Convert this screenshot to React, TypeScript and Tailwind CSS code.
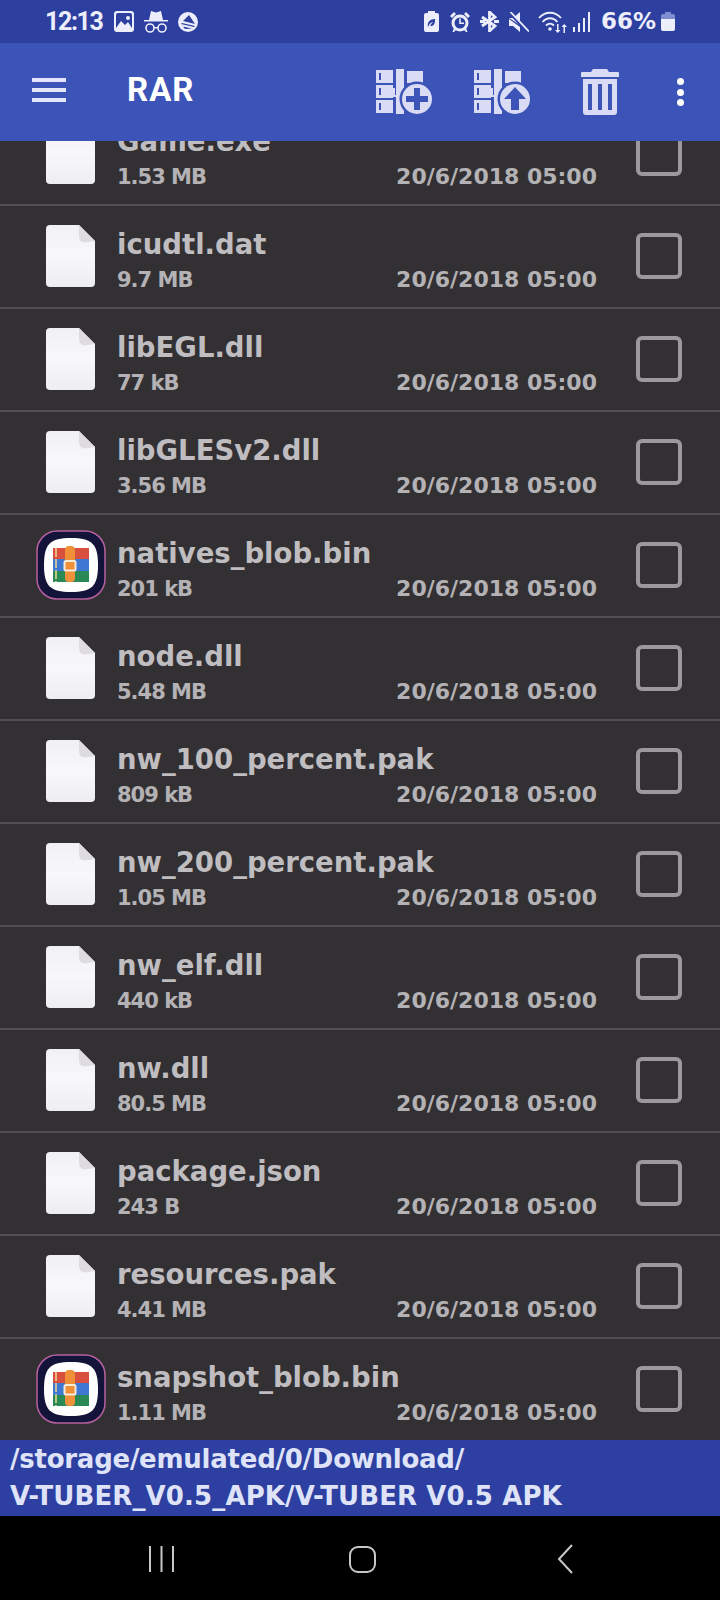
import type { ReactNode } from "react";

type FileEntry = { name: string; size: string; archive?: boolean };

const FILES: FileEntry[] = [
  { name: "Game.exe", size: "1.53 MB" },
  { name: "icudtl.dat", size: "9.7 MB" },
  { name: "libEGL.dll", size: "77 kB" },
  { name: "libGLESv2.dll", size: "3.56 MB" },
  { name: "natives_blob.bin", size: "201 kB", archive: true },
  { name: "node.dll", size: "5.48 MB" },
  { name: "nw_100_percent.pak", size: "809 kB" },
  { name: "nw_200_percent.pak", size: "1.05 MB" },
  { name: "nw_elf.dll", size: "440 kB" },
  { name: "nw.dll", size: "80.5 MB" },
  { name: "package.json", size: "243 B" },
  { name: "resources.pak", size: "4.41 MB" },
  { name: "snapshot_blob.bin", size: "1.11 MB", archive: true },
];

function DocIcon() {
  return (
    <svg width="49" height="62" viewBox="0 0 49 62" className="block">
      <defs>
        <linearGradient id="sheet" x1="0" y1="0" x2="0" y2="1">
          <stop offset="0" stopColor="#f1f0f3" />
          <stop offset="0.5" stopColor="#f8f7fa" />
          <stop offset="1" stopColor="#eeedf0" />
        </linearGradient>
      </defs>
      <path d="M4 0H33L49 16V58a4 4 0 0 1-4 4H4a4 4 0 0 1-4-4V4a4 4 0 0 1 4-4Z" fill="url(#sheet)" />
      <path d="M33 0L49 16L39 17.5Q33 17 33 11Z" fill="#dedce0" />
    </svg>
  );
}

function RarAppIcon() {
  return (
    <svg width="70" height="70" viewBox="0 0 70 70" className="block">
      <rect x="1" y="1" width="68" height="68" rx="20" fill="#14143a" stroke="#b8609f" strokeWidth="1.5" />
      <path d="M35 8C56 8 62 14 62 35S56 62 35 62S8 56 8 35S14 8 35 8Z" fill="#ffffff" />
      <rect x="17" y="18" width="36" height="11" fill="#d9503f" />
      <rect x="17" y="29" width="36" height="12" fill="#3f78d2" />
      <rect x="17" y="41" width="36" height="11" fill="#2a8a55" />
      <path d="M20 18V52" stroke="#f0d890" strokeWidth="1.5" strokeDasharray="9 2" />
      <rect x="29" y="16" width="10" height="36" rx="4" fill="#f0913a" />
      <rect x="28.5" y="31" width="11" height="9.5" rx="1.5" fill="none" stroke="#f6ecdc" strokeWidth="2" />
    </svg>
  );
}

// Stacked books shared by the two archive actions in the toolbar
function ArchiveBooks() {
  return (
    <>
      <path
        fillRule="evenodd"
        d="M0 1H17V14H0ZM3 4V11H5V4ZM0 16H17V29H0ZM3 19V26H5V19ZM0 31H17V44H0ZM3 34V41H5V34Z"
      />
      <path d="M20 0H28V45H20Z" />
      <path d="M31 2H47V14H31Z" />
      <path d="M17 19H19V26H23V28H17Z" />
    </>
  );
}

function AddArchiveIcon() {
  return (
    <svg width="57" height="46" viewBox="0 0 57 46" fill="#dadcf5" className="block">
      <ArchiveBooks />
      <circle cx="41" cy="30" r="17.5" fill="#3c54b7" />
      <circle cx="41" cy="30" r="15" />
      <path d="M38 19H44V27H52V33H44V41H38V33H30V27H38Z" fill="#3c54b7" />
    </svg>
  );
}

function ExtractArchiveIcon() {
  return (
    <svg width="57" height="46" viewBox="0 0 57 46" fill="#dadcf5" className="block">
      <ArchiveBooks />
      <circle cx="41" cy="30" r="17.5" fill="#3c54b7" />
      <circle cx="41" cy="30" r="15" />
      <path d="M41 18L52 30H45V41H37V30H30Z" fill="#3c54b7" />
    </svg>
  );
}

function TrashIcon() {
  return (
    <svg width="38" height="46" viewBox="0 0 38 46" fill="#dadcf5" className="block">
      <path d="M12 0H26L28 3H37a1 1 0 0 1 1 1V8H0V4a1 1 0 0 1 1-1H10Z" />
      <path
        fillRule="evenodd"
        d="M2 10H36V43a3 3 0 0 1-3 3H5a3 3 0 0 1-3-3ZM7 15V41H11V15ZM17 15V41H21V15ZM27 15V41H31V15Z"
      />
    </svg>
  );
}

function StatusSvg({ w, h, children }: { w: number; h: number; children: ReactNode }) {
  return (
    <svg width={w} height={h} viewBox={`0 0 ${w} ${h}`} fill="#eceefb" className="block">
      {children}
    </svg>
  );
}

function StatusBar() {
  return (
    <div className="flex h-[43px] items-center bg-[#2d3f9f] pl-[45px] text-[#eceefb]">
      <span className="w-[69px] font-[Roboto,sans-serif] text-[25px] font-bold leading-none tracking-[-1.4px]">
        12:13
      </span>
      <StatusSvg w={20} h={21}>
        <path
          fillRule="evenodd"
          d="M3 0H17a3 3 0 0 1 3 3V18a3 3 0 0 1-3 3H3a3 3 0 0 1-3-3V3a3 3 0 0 1 3-3ZM2 17L7 10L11 14L14 11L18 17V4a2 2 0 0 0-2-2H4a2 2 0 0 0-2 2ZM14 5a2 2 0 1 1 0 4a2 2 0 0 1 0-4Z"
        />
      </StatusSvg>
      <div className="ml-[10px]">
        <StatusSvg w={24} h={22}>
          <path d="M7 0L12 1.5L17 0L19 9H24V10.5H0V9H5Z" />
          <circle cx="6" cy="17" r="4" fill="none" stroke="#eceefb" strokeWidth="1.6" />
          <circle cx="18" cy="17" r="4" fill="none" stroke="#eceefb" strokeWidth="1.6" />
          <path d="M10 16H14V17.5H10Z" />
        </StatusSvg>
      </div>
      <div className="ml-[10px]">
        <StatusSvg w={20} h={20}>
          <path
            fillRule="evenodd"
            d="M10 0a10 10 0 1 1 0 20a10 10 0 0 1 0-20ZM11 3L5 9L17 12ZM4 11L3 12L16 15L17 14ZM5 14.5L7 17L14 16.5Z"
          />
        </StatusSvg>
      </div>

      <div className="ml-auto mr-[45px] flex items-center">
        <StatusSvg w={15} h={21}>
          <path
            fillRule="evenodd"
            d="M4 0H11V2H13a2 2 0 0 1 2 2V19a2 2 0 0 1-2 2H2a2 2 0 0 1-2-2V4a2 2 0 0 1 2-2H4ZM11 8C6 8 3 11 4 16L5 14C6 12 8 11 9 11L6 14.5C9 16 11.5 13 11 8Z"
          />
        </StatusSvg>
        <div className="ml-[11px]">
          <StatusSvg w={20} h={20}>
            <circle cx="10" cy="11" r="7" fill="none" stroke="#eceefb" strokeWidth="3" />
            <path d="M9.2 6.5H10.8V10.5H14V12H9.2Z" />
            <path d="M0 4L4 0L6 2L2 6ZM20 4L16 0L14 2L18 6Z" />
            <path d="M4 16L6 18L4 20H2.5ZM16 16L14 18L16 20H17.5Z" />
          </StatusSvg>
        </div>
        <div className="ml-[10px]">
          <StatusSvg w={19} h={21}>
            <path
              d="M2 6L15 15L9.5 20V1L15 6L2 15M0 10.5H5M14 10.5H19"
              fill="none"
              stroke="#eceefb"
              strokeWidth="2.8"
            />
          </StatusSvg>
        </div>
        <div className="ml-[10px]">
          <StatusSvg w={20} h={20}>
            <path d="M0 6H4L11 0V13ZM0 7V14H4L11 20V15Z" />
            <path d="M0 0L19 20" stroke="#2d3f9f" strokeWidth="3" />
            <path d="M1.5 0L20 19.5" stroke="#eceefb" strokeWidth="1.8" />
          </StatusSvg>
        </div>
        <div className="ml-[9px]">
          <StatusSvg w={29} h={22}>
            <g fill="none" stroke="#eceefb" strokeWidth="1.8">
              <path d="M1 7C7 0 17 0 23 7" />
              <path d="M4.5 11C9 6 15 6 19.5 11" />
              <path d="M8 14.5C10.5 12 13.5 12 16 14.5" />
            </g>
            <circle cx="12" cy="18" r="1.8" />
            <path d="M19 13H20.5V19H22.5L19.8 22L17 19H19ZM25.5 22H27V16H29L26.2 13L23.5 16H25.5Z" />
          </StatusSvg>
        </div>
        <div className="ml-[6px]">
          <StatusSvg w={18} h={20}>
            <path d="M0 15H2V20H0ZM5 11H7V20H5ZM10 6H12V20H10ZM15 0H17V20H15Z" />
          </StatusSvg>
        </div>
        <span className="ml-[10px] w-[56px] text-[23px] font-bold leading-none">66%</span>
        <div className="ml-[4px]">
          <StatusSvg w={14} h={19}>
            <path d="M4 0H10V2H12a2 2 0 0 1 2 2V7H0V4a2 2 0 0 1 2-2H4Z" fill="#7f8dd0" />
            <path d="M0 7H14V17a2 2 0 0 1-2 2H2a2 2 0 0 1-2-2Z" />
          </StatusSvg>
        </div>
      </div>
    </div>
  );
}

function Toolbar() {
  return (
    <div className="flex h-[98px] shrink-0 items-center bg-[#3c54b7] pb-[5px] pl-[32px]">
      <div className="flex w-[34px] flex-col gap-[6px]">
        <div className="h-[4px] bg-[#e3e6f8]" />
        <div className="h-[4px] bg-[#e3e6f8]" />
        <div className="h-[4px] bg-[#e3e6f8]" />
      </div>
      <span className="ml-[61px] font-[Roboto,sans-serif] text-[33px] font-bold leading-none tracking-[1px] text-white">
        RAR
      </span>
      <div className="ml-auto flex items-center pr-[36px] pt-[5px]">
        <AddArchiveIcon />
        <div className="ml-[41px]">
          <ExtractArchiveIcon />
        </div>
        <div className="ml-[50px]">
          <TrashIcon />
        </div>
        <div className="ml-[58px] flex flex-col gap-[3.5px]">
          <div className="h-[7px] w-[7px] rounded-full bg-white" />
          <div className="h-[7px] w-[7px] rounded-full bg-white" />
          <div className="h-[7px] w-[7px] rounded-full bg-white" />
        </div>
      </div>
    </div>
  );
}

function FileRow({ file }: { file: FileEntry }) {
  return (
    <div className="flex h-[103px] shrink-0 items-start border-t-2 border-[#504e51]">
      <div className="flex h-full w-[117px] shrink-0 items-center justify-center pb-[1px] pl-[24px]">
        {file.archive ? <RarAppIcon /> : <DocIcon />}
      </div>
      <div className="w-[480px] shrink-0 pt-[20px]">
        <div className="text-[27.5px] font-bold leading-[36px] text-[#bfbdc0]">{file.name}</div>
        <div className="flex items-baseline justify-between font-bold leading-[36px] text-[#b4b2b5]">
          <span className="text-[21px] tracking-[-1px]">{file.size}</span>
          <span className="text-[22px]">20/6/2018 05:00</span>
        </div>
      </div>
      <div className="ml-[39px] mt-[27px] h-[46px] w-[46px] rounded-[6px] border-4 border-[#9b999b]" />
    </div>
  );
}

export default function App() {
  return (
    <div className="flex h-[1600px] w-[720px] flex-col overflow-hidden bg-black font-['DejaVu_Sans',sans-serif]">
      <StatusBar />
      <Toolbar />
      {/* list is scrolled to its end, so the first row is cut off by the toolbar */}
      <div className="flex h-[1299px] flex-col justify-end overflow-hidden bg-[#323033]">
        {FILES.map((file) => (
          <FileRow key={file.name} file={file} />
        ))}
      </div>
      <div className="h-[76px] bg-[#2d3fa0] px-[10px] pt-[1px] text-[26px] font-bold leading-[37px] text-[#dfe3f8]">
        <div className="tracking-[-0.25px]">/storage/emulated/0/Download/</div>
        <div className="tracking-[0.12px]">V-TUBER_V0.5_APK/V-TUBER V0.5 APK</div>
      </div>
      <div className="flex flex-1 items-center pl-[148px] pt-[2px]">
        <svg width="27" height="26" viewBox="0 0 27 26" fill="#c8c8c8" className="block">
          <path d="M1 0H3V26H1ZM12.5 0H14.5V26H12.5ZM24 0H26V26H24Z" />
        </svg>
        <div className="ml-[174px] h-[27px] w-[27px] rounded-[9px] border-2 border-[#c8c8c8]" />
        <svg width="16" height="30" viewBox="0 0 16 30" fill="none" stroke="#c8c8c8" strokeWidth="2" className="ml-[181px] block">
          <path d="M15 1L2 15L15 29" />
        </svg>
      </div>
    </div>
  );
}
